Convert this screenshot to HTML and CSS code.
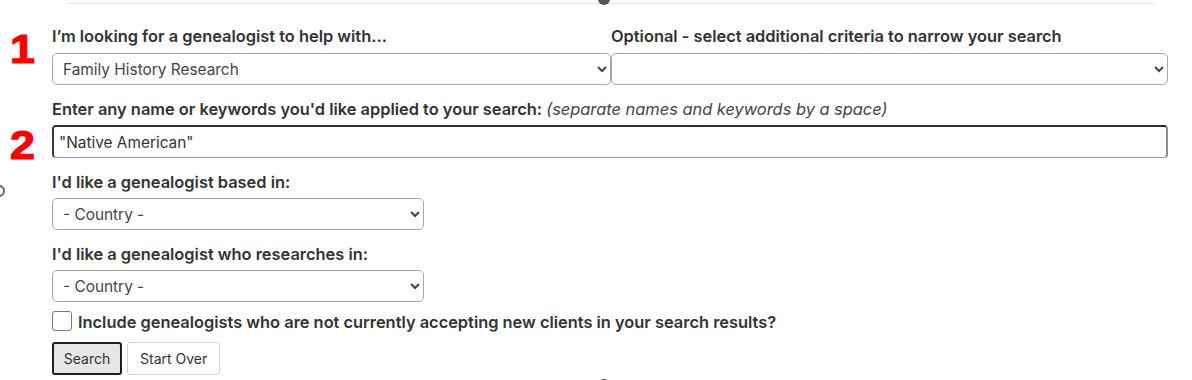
FILE: index.html
```html
<!DOCTYPE html>
<html lang="en">
<head>
<meta charset="utf-8">
<title>Find a genealogist</title>
<link rel="stylesheet" href="styles.css">
</head>
<body>
<div class="page">
  <div class="topline"></div>
  <span class="deco deco-top"></span>
  <span class="deco deco-left"></span>
  <span class="deco deco-bottom"></span>
  <span class="step step-1">1</span>
  <span class="step step-2">2</span>

  <form class="search-form">
    <div class="two-col">
      <div class="field">
        <label class="lbl">I’m looking for a genealogist to help with...</label>
        <select class="sel sel-left"><option>Family History Research</option></select>
      </div>
      <div class="field">
        <label class="lbl">Optional - select additional criteria to narrow your search</label>
        <select class="sel sel-right"><option></option></select>
      </div>
    </div>

    <div class="field field-gap">
      <label class="lbl">Enter any name or keywords you'd like applied to your search: <em class="hint">(separate names and keywords by a space)</em></label>
      <input class="txt" type="text" value="&quot;Native American&quot;">
    </div>

    <div class="field field-gap">
      <label class="lbl">I'd like a genealogist based in:</label>
      <select class="sel sel-small"><option>- Country -</option></select>
    </div>

    <div class="field field-gap">
      <label class="lbl">I'd like a genealogist who researches in:</label>
      <select class="sel sel-small"><option>- Country -</option></select>
    </div>

    <label class="check-row">
      <input type="checkbox" class="chk">
      <span class="check-text">Include genealogists who are not currently accepting new clients in your search results?</span>
    </label>

    <div class="buttons">
      <button type="button" class="btn btn-primary">Search</button>
      <button type="button" class="btn">Start Over</button>
    </div>
  </form>
</div>
</body>
</html>
```

FILE: styles.css
```css
* { box-sizing: border-box; }
html, body { margin: 0; padding: 0; background: #fff; }
body {
  font-family: "Inter", "Liberation Sans", sans-serif;
  color: #333;
  width: 1192px;
  height: 380px;
  overflow: hidden;
}
.page {
  position: relative;
  width: 1192px;
  height: 380px;
}
.topline {
  margin: 3px 0 0 67px;
  width: 1088px;
  height: 1px;
  background: #e6e6e6;
}
.deco { position: absolute; border-radius: 50%; }
.deco-top {
  left: 598px; top: -10px; width: 12px; height: 12px;
  background: #555;
}
.deco-bottom {
  left: 598px; top: 376px; width: 12px; height: 12px;
  background: #555;
}
.deco-left {
  left: -7px; top: 182px; width: 12px; height: 12px;
  border: 2px solid #666;
}
.step {
  position: absolute;
  left: 10px;
  font-family: "Liberation Sans", Arial, sans-serif;
  font-weight: 700;
  font-size: 40px;
  line-height: 40px;
  color: #f00;
  -webkit-text-stroke: 1.2px #f00;
  transform-origin: left top;
  transform: scaleX(1.12);
}
.step-1 { top: 26px; }
.step-2 { top: 122px; }

.search-form {
  padding: 22px 24px 0 52px;
}
.two-col {
  display: grid;
  grid-template-columns: 559px 557px;
}
.field { display: flex; flex-direction: column; }
.field-gap { margin-top: 14px; }
.lbl {
  font-size: 16.4px;
  font-weight: 600;
  line-height: 20px;
  margin-bottom: 7px;
  color: #333;
  white-space: nowrap;
}
.field-gap .lbl { margin-bottom: 6px; }
.hint {
  font-weight: 400;
  font-style: italic;
  color: #444;
}
.sel {
  height: 32px;
  font-family: inherit;
  font-size: 15.4px;
  color: #444;
  background: #fff;
  border: 1px solid #a9a9a9;
  border-radius: 5px;
  padding: 0 6px;
}
.sel-left { width: 559px; }
.sel-right { width: 557px; }
.sel-small { width: 372px; }
.txt {
  width: 1116px;
  height: 33px;
  font-family: inherit;
  font-size: 15.4px;
  color: #333;
  padding: 0 5px;
  border-style: solid;
  border-width: 2px 2px 1px 2px;
  border-color: #2d2d2d #8a8a8a #9a9a9a #3a3a3a;
  border-radius: 4px;
  outline: none;
}
.check-row {
  display: flex;
  align-items: flex-end;
  margin-top: 9px;
  gap: 6px;
}
.chk {
  appearance: none;
  -webkit-appearance: none;
  margin: 0;
  width: 20px;
  height: 20px;
  border: 1px solid #777;
  border-radius: 3px;
  background: #fff;
}
.check-text {
  font-size: 16.4px;
  font-weight: 600;
  line-height: 18px;
  color: #333;
}
.buttons {
  display: flex;
  gap: 5px;
  margin-top: 11px;
}
.btn {
  height: 33px;
  font-family: inherit;
  font-size: 14px;
  color: #333;
  background: #fff;
  border: 1px solid #d4d4d4;
  border-radius: 3px;
  padding: 0 12px;
}
.btn-primary {
  width: 70px;
  background: #e6e6e6;
  border: 2px solid #1f1f1f;
  padding: 0;
}
```
